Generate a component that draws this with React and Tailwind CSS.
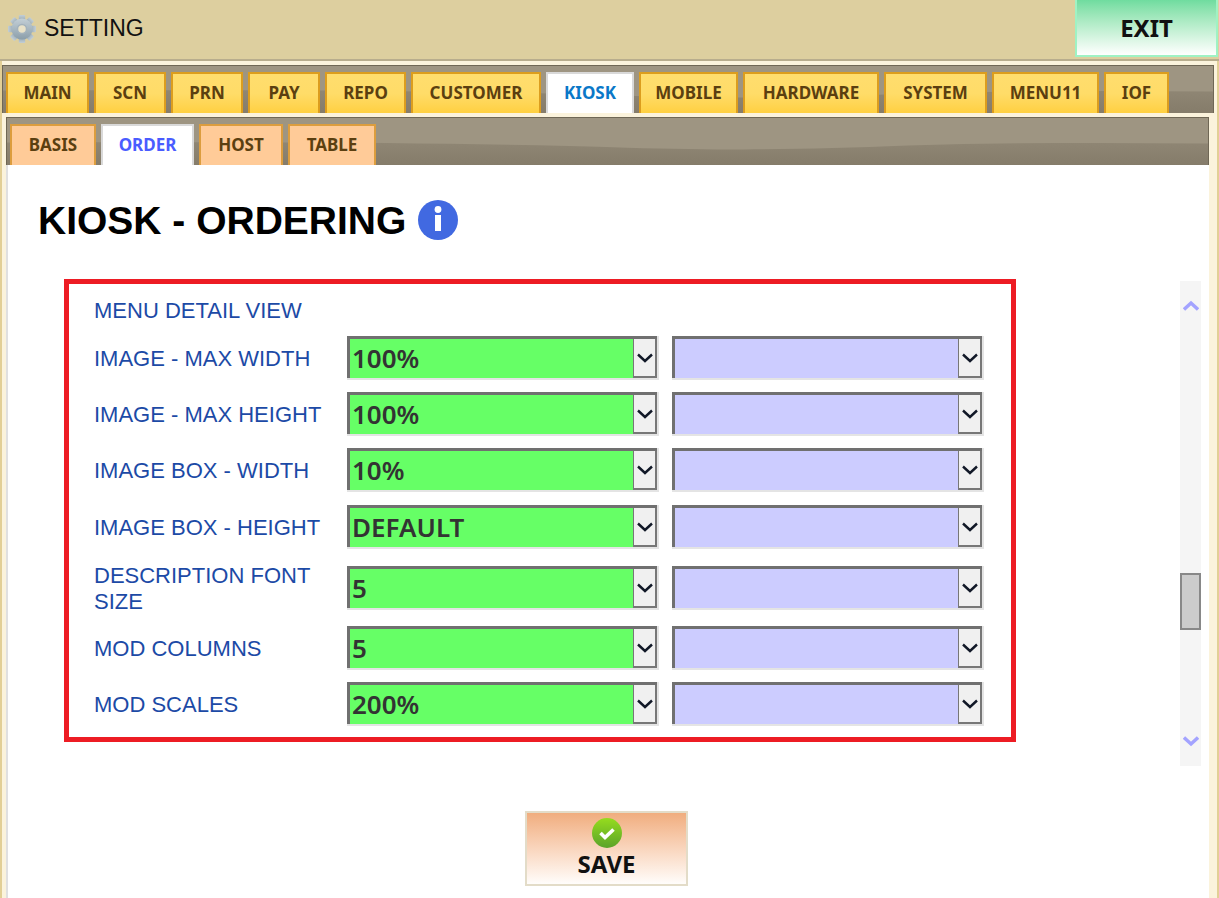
import React from 'react';

const mainTabs = [
  { name: 'MAIN', w: 'w-[83px]' },
  { name: 'SCN', w: 'w-[72px]' },
  { name: 'PRN', w: 'w-[72px]' },
  { name: 'PAY', w: 'w-[72px]' },
  { name: 'REPO', w: 'w-[81px]' },
  { name: 'CUSTOMER', w: 'w-[130px]' },
  { name: 'KIOSK', w: 'w-[88px]', active: true },
  { name: 'MOBILE', w: 'w-[99px]' },
  { name: 'HARDWARE', w: 'w-[136px]' },
  { name: 'SYSTEM', w: 'w-[103px]' },
  { name: 'MENU11', w: 'w-[107px]' },
  { name: 'IOF', w: 'w-[65px]' },
];

const subTabs = [
  { name: 'BASIS', w: 'w-[86px]' },
  { name: 'ORDER', w: 'w-[93px]', active: true },
  { name: 'HOST', w: 'w-[84px]' },
  { name: 'TABLE', w: 'w-[88px]' },
];

const rows = [
  { label: 'IMAGE - MAX WIDTH', value: '100%' },
  { label: 'IMAGE - MAX HEIGHT', value: '100%' },
  { label: 'IMAGE BOX - WIDTH', value: '10%' },
  { label: 'IMAGE BOX - HEIGHT', value: 'DEFAULT', nudge: true },
  { label: 'DESCRIPTION FONT SIZE', value: '5', tall: true, nudge: true },
  { label: 'MOD COLUMNS', value: '5' },
  { label: 'MOD SCALES', value: '200%' },
];

const Wave = () => (
  <svg className="absolute inset-0 w-full h-full" viewBox="0 0 1200 46" preserveAspectRatio="none">
    <defs>
      <linearGradient id="waveFill" x1="0" y1="0" x2="0" y2="1">
        <stop offset="0" stopColor="#8f8674" />
        <stop offset="1" stopColor="#857c6a" />
      </linearGradient>
    </defs>
    <path d="M0 24C250 23 450 24 620 29C730 32 800 31 900 27C1000 24 1100 24 1200 25L1200 46L0 46Z" fill="url(#waveFill)" />
  </svg>
);

const Gear = () => (
  <svg width="30" height="30" viewBox="0 0 30 30">
    <defs>
      <linearGradient id="gearFill" x1="0" y1="0" x2="0" y2="1">
        <stop offset="0" stopColor="#c3cfd6" />
        <stop offset="1" stopColor="#8b9eaa" />
      </linearGradient>
    </defs>
    <g fill="url(#gearFill)">
      {[0, 45, 90, 135, 180, 225, 270, 315].map((a) => (
        <rect key={a} x="11.8" y="1" width="6.4" height="7" rx="1" transform={`rotate(${a} 15 15)`} />
      ))}
      <circle cx="15" cy="15" r="10.5" />
    </g>
    <circle cx="15" cy="15" r="4.5" fill="#e9e2c8" stroke="#a3b2bc" strokeWidth="1.5" />
  </svg>
);

const Chevron = ({ up, color = '#111827', size = 16, width = 2.4 }) => (
  <svg width={size} height={size} viewBox="0 0 16 16" fill="none">
    <path d={up ? 'M1 11.5L8 5L15 11.5' : 'M1 4.5L8 11L15 4.5'} stroke={color} strokeWidth={width} />
  </svg>
);

const SelectBox = ({ value, tint }) => (
  <div className="w-[312px] h-[44px] bg-[#e4e4e4] pr-[2px] pb-[2px] shrink-0">
    <div className="h-full border-t-[3px] border-l-[3px] border-[#707070] flex">
      <div className={`flex-1 flex items-center pl-[2px] text-[26px] font-semibold text-[#333333] font-['Noto_Sans',sans-serif] ${tint}`}>
        {value}
      </div>
      <div className="w-[24px] bg-[#f0f0f0] border-2 border-t-0 border-l-[1px] border-[#777777] flex items-center justify-center">
        <Chevron />
      </div>
    </div>
  </div>
);

export default function App() {
  return (
    <div className="w-[1219px] h-[898px] overflow-hidden flex flex-col bg-white font-['Liberation_Sans',sans-serif]">
      {/* Title bar */}
      <div className="h-[61px] shrink-0 bg-[#ddcf9f] border-b-2 border-[#b8ad8d] flex justify-between">
        <div className="flex items-center pl-[7px] gap-[7px] pb-[2px]">
          <Gear />
          <span className="text-[23px] text-[#111111]">SETTING</span>
        </div>
        <div className="w-[143px] h-[57px] mr-[1px] bg-gradient-to-b from-[#6fdc9f] to-[#ffffff] border-2 border-t-0 border-[#9ff2c4] flex items-center justify-center text-[24px] font-bold text-[#111111] font-['Noto_Sans',sans-serif]">
          EXIT
        </div>
      </div>

      <div className="flex-1 flex flex-col bg-[#fbf3dc] pt-[4px] border-l-2 border-r-[2px] border-[#e2cf96] pr-[3px] min-h-0">
        {/* Main tabs */}
        <div className="relative h-[48px] shrink-0 bg-[#9e9582] border border-b-0 border-[#6f6755] pt-[6px] pl-[3px]">
          <Wave />
          <div className="relative flex gap-[5px] h-full items-end">
            {mainTabs.map((t) => (
              <div
                key={t.name}
                className={`${t.w} h-[41px] pb-[2px] flex items-center justify-center text-[17px] font-bold font-['Noto_Sans',sans-serif] border-2 border-b-0 ${
                  t.active
                    ? 'bg-white text-[#0a78c8] border-[#d9d9d9]'
                    : 'bg-gradient-to-b from-[#ffdd6e] via-[#ffdc68] to-[#ffd040] text-[#5b3f10] border-[#dc9d1e]'
                }`}
              >
                {t.name}
              </div>
            ))}
          </div>
        </div>

        <div className="flex-1 flex flex-col min-h-0 pt-[4px] pl-[4px] pr-[5px] bg-[#fbf3dc]">
          {/* Sub tabs */}
          <div className="relative h-[48px] shrink-0 bg-[#9e9582] border border-b-0 border-[#6f6755] pt-[6px] pl-[3px]">
            <Wave />
            <div className="relative flex gap-[5px] h-full items-end">
              {subTabs.map((t) => (
                <div
                  key={t.name}
                  className={`${t.w} h-[41px] pb-[2px] flex items-center justify-center text-[17px] font-bold font-['Noto_Sans',sans-serif] border-2 border-b-0 ${
                    t.active
                      ? 'bg-white text-[#4a5cff] border-[#d9d9d9]'
                      : 'bg-[#ffcb98] text-[#5b3f10] border-[#dc9d3e]'
                  }`}
                >
                  {t.name}
                </div>
              ))}
            </div>
          </div>

          {/* Page */}
          <div className="flex-1 min-h-0 bg-white border-l-2 border-[#e0e0e0] pl-[30px]">
            <div className="flex items-center gap-[11px] mt-[34px] h-[42px]">
              <h1 className="text-[39px] font-bold text-black leading-none">KIOSK - ORDERING</h1>
              <svg width="42" height="42" viewBox="0 0 42 42">
                <circle cx="21" cy="21" r="20" fill="#4169e1" />
                <circle cx="21" cy="10.5" r="3.4" fill="#fff" />
                <rect x="18" y="16" width="6" height="16" fill="#fff" />
              </svg>
            </div>

            <div className="flex mt-[38px]">
              <div className="w-[952px] h-[463px] ml-[26px] border-[5px] border-[#ed1c24] pl-[25px] pr-[28px] pt-[13px] shrink-0">
                <div className="h-[39px] text-[22px] text-[#1c4aa6] leading-[28px]">MENU DETAIL VIEW</div>
                <div className="flex flex-col gap-[12px]">
                  {rows.map((r) => (
                    <div key={r.label} className={`flex items-center ${r.tall ? 'h-[52px]' : 'h-[44px]'} ${r.nudge ? 'mt-[1px]' : ''}`}>
                      <div className="w-[253px] pr-[2px] pt-[2px] text-[22px] leading-[26px] text-[#1c4aa6] shrink-0">
                        {r.label}
                      </div>
                      <div className="flex gap-[13px]">
                        <SelectBox value={r.value} tint="bg-[#66ff66]" />
                        <SelectBox value="" tint="bg-[#ccccff]" />
                      </div>
                    </div>
                  ))}
                </div>
              </div>

              {/* Scrollbar */}
              <div className="relative w-[21px] h-[485px] mt-[2px] ml-[164px] bg-[#f5f5f5] shrink-0 flex flex-col items-center justify-between py-[17px]">
                <Chevron up color="#a3a3ff" size={16} width={3.4} />
                <Chevron color="#a3a3ff" size={16} width={3.4} />
                <div className="absolute left-0 top-[292px] w-[21px] h-[57px] bg-[#cccccc] border-2 border-[#888888]" />
              </div>
            </div>

            <div className="flex justify-center w-[1137px] mt-[45px]">
              <div className="w-[163px] h-[75px] border-2 border-[#e3dcc8] bg-gradient-to-b from-[#f0ad7e] to-[#fffdfb] flex flex-col items-center pt-[5px]">
                <svg width="30" height="30" viewBox="0 0 30 30">
                  <defs>
                    <linearGradient id="saveFill" x1="0" y1="0" x2="0" y2="1">
                      <stop offset="0" stopColor="#96dc1e" />
                      <stop offset="1" stopColor="#5aa32a" />
                    </linearGradient>
                  </defs>
                  <circle cx="15" cy="15" r="15" fill="url(#saveFill)" />
                  <path d="M8.5 15L13 19.5L21.5 11.5" fill="none" stroke="#fff" strokeWidth="3.6" />
                </svg>
                <span className="text-[24px] font-bold text-[#111111] leading-[27px] mt-[2px] font-['Noto_Sans',sans-serif]">SAVE</span>
              </div>
            </div>
          </div>
        </div>
      </div>
    </div>
  );
}
